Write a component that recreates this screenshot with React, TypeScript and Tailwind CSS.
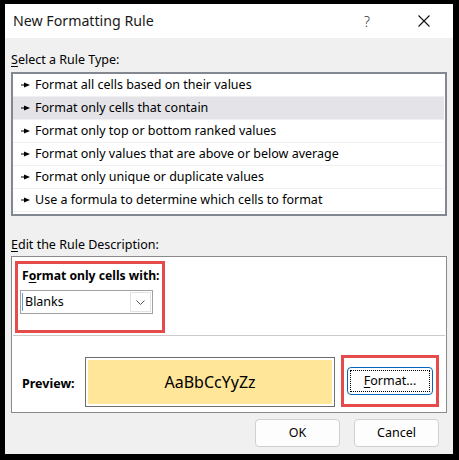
import React from 'react';

const rules = [
  'Format all cells based on their values',
  'Format only cells that contain',
  'Format only top or bottom ranked values',
  'Format only values that are above or below average',
  'Format only unique or duplicate values',
  'Use a formula to determine which cells to format',
];

function Pointer() {
  return (
    <svg width="9" height="6" viewBox="0 0 9 6" className="mr-[5px] shrink-0">
      <rect x="0" y="2.5" width="4" height="1" fill="#000" />
      <path d="M3 0.5 L9 3 L3 5.5 Z" fill="#000" />
    </svg>
  );
}

function RuleRow({ text, selected }: { text: string; selected: boolean }) {
  return (
    <div
      className={`flex h-[23px] items-center border-b border-[#f0f0f0] pl-[8px] ${selected ? 'bg-[#e3e3e8]' : 'bg-white'}`}
    >
      <Pointer />
      <span>{text}</span>
    </div>
  );
}

export default function App() {
  return (
    <div
      className="h-[460px] w-[459px] bg-black pb-[6px] pl-[5px] pr-[6px] pt-[4px] text-[12.5px] text-black"
      style={{ fontFamily: '"Noto Sans", "Open Sans", sans-serif' }}
    >
      <div className="flex h-full flex-col bg-[#f0f0f0]">
        {/* title bar */}
        <div className="flex h-[34px] shrink-0 items-center bg-white">
          <span className="flex-1 pl-[8px] text-[14.2px] text-[#1a1a1a]">New Formatting Rule</span>
          <span className="text-[14px] font-light text-[#333]">?</span>
          <svg width="12" height="12" viewBox="0 0 12 12" className="ml-[48px] mr-[23px]">
            <path d="M0.5 0.5 L11.5 11.5 M11.5 0.5 L0.5 11.5" stroke="#111" strokeWidth="1.1" />
          </svg>
        </div>

        <div className="flex flex-1 flex-col px-[6px]">
          <div className="mb-[4px] mt-[14px] leading-[16px]">
            <u className="underline-offset-[2px]">S</u>elect a Rule Type:
          </div>

          <div className="h-[144px] border-2 border-[#828790] bg-white pr-[1px]">
            {rules.map((r, i) => (
              <RuleRow key={r} text={r} selected={i === 1} />
            ))}
          </div>

          <div className="mb-[3px] mt-[21px] leading-[16px]">
            <u className="underline-offset-[2px]">E</u>dit the Rule Description:
          </div>

          <div className="flex h-[157px] flex-col border border-[#8a8a8a] bg-white">
            <div className="pl-[3px] pt-[4px]">
              <div className="h-[72px] w-[150px] border-[3px] border-[#e54b4b] pl-[1px] pt-[3px]">
                <div className="whitespace-nowrap pl-[3px] text-[12.2px] font-bold leading-[18px]">
                  F<u className="underline-offset-[2px]">o</u>rmat only cells with:
                </div>
                <div className="ml-[1px] mt-[5px] flex h-[24px] w-[133px] items-center border border-[#a0a0a0] bg-white">
                  <div className="ml-[1px] h-[18px] w-px bg-[#5aa0e0]" />
                  <span className="flex-1 pl-[2px]">Blanks</span>
                  <div className="mr-[1px] flex h-[20px] w-[21px] items-center justify-center border border-[#e3e3e3] bg-white">
                    <svg width="9" height="5" viewBox="0 0 9 5">
                      <path d="M0.5 0.5 L4.5 4.5 L8.5 0.5" fill="none" stroke="#555" strokeWidth="1" />
                    </svg>
                  </div>
                </div>
              </div>
            </div>

            <div className="mx-[1px] mt-[2px] h-px bg-[#cacaca]" />

            <div className="flex flex-1 items-start pt-[19px]">
              <div className="w-[73px] pl-[10px] pt-[21px] font-bold leading-[16px]">Preview:</div>
              <div className="mt-[2px] h-[50px] w-[250px] border border-[#6e6e6e] bg-white p-[2px]">
                <div className="flex h-full items-center justify-center bg-[#ffe699] text-[16px]">AaBbCcYyZz</div>
              </div>
              <div className="ml-[6px] flex h-[52px] w-[98px] items-center justify-center border-[3px] border-[#e54b4b]">
                <div className="flex h-[28px] w-[86px] items-center justify-center rounded-[4px] border border-[#0067c0] bg-[#fdfdfd] p-[2px]">
                  <div className="flex h-full w-full items-center justify-center border border-dotted border-black">
                    <span>
                      <u className="underline-offset-[2px]">F</u>ormat...
                    </span>
                  </div>
                </div>
              </div>
            </div>
          </div>

          <div className="mt-[6px] flex justify-end gap-[14px] pr-[8px]">
            <button className="h-[28px] w-[85px] rounded-[4px] border border-[#d0d0d0] bg-[#fdfdfd]">OK</button>
            <button className="h-[28px] w-[85px] rounded-[4px] border border-[#d0d0d0] bg-[#fdfdfd]">Cancel</button>
          </div>
        </div>
      </div>
    </div>
  );
}
